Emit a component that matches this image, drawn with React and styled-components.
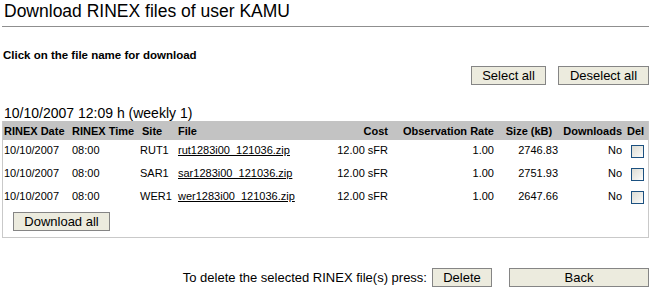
import React from "react";
import styled, { createGlobalStyle } from "styled-components";

const Global = createGlobalStyle`
  html, body { margin: 0; padding: 0; background: #fff; }
  body { font-family: "Liberation Sans", Arial, sans-serif; color: #000; }
`;

const Page = styled.div`
  width: 647px;
  margin-left: 2px;
  display: flex;
  flex-direction: column;
`;

const Title = styled.h1`
  margin: 0;
  padding: 1px 0 0 2px;
  font-size: 17.5px;
  line-height: 20px;
  font-weight: normal;
`;

const Rule = styled.div`
  margin-top: 5px;
  height: 1px;
  background: #8f8f8f;
`;

const Hint = styled.div`
  margin-top: 22px;
  padding-left: 1px;
  font-size: 11.5px;
  line-height: 13px;
  font-weight: bold;
`;

const Toolbar = styled.div`
  display: flex;
  justify-content: ${(p) => p.$justify || "flex-end"};
  align-items: center;
  gap: ${(p) => p.$gap || 12}px;
  margin-top: ${(p) => p.$top || 0}px;
`;

const Button = styled.button`
  box-sizing: border-box;
  width: ${(p) => p.$w}px;
  height: ${(p) => p.$h || 19}px;
  padding: 0;
  margin: 0;
  background: #ecebde;
  border: 1px solid #858585;
  border-radius: 0;
  font-family: "Liberation Sans", Arial, sans-serif;
  font-size: 13px;
  color: #000;
  line-height: 1;
  cursor: pointer;
`;

const Stamp = styled.div`
  margin-top: 20px;
  padding-left: 2px;
  font-size: 14px;
  line-height: 16px;
`;

const Box = styled.div`
  border: 1px solid #c9c9c9;
  border-top: none;
  padding-bottom: 6px;
`;

const Table = styled.table`
  width: 100%;
  table-layout: fixed;
  border-collapse: collapse;
  border-spacing: 0;
  font-size: 11px;
`;

const HeadRow = styled.tr`
  background: #c3c3c3;
  height: 19px;
`;

const Th = styled.th`
  font-weight: bold;
  vertical-align: top;
  padding: 4px ${(p) => p.$pr ?? 0}px 0 ${(p) => p.$pl ?? 0}px;
  text-align: ${(p) => p.$align || "left"};
  white-space: nowrap;
  overflow: visible;
`;

const Row = styled.tr`
  height: 23px;
`;

const Td = styled.td`
  vertical-align: top;
  padding: 4px ${(p) => p.$pr ?? 0}px 0 ${(p) => p.$pl ?? 0}px;
  text-align: ${(p) => p.$align || "left"};
  white-space: nowrap;
`;

const FileLink = styled.a`
  color: #000;
  text-decoration: underline;
`;

const Check = styled.input.attrs({ type: "checkbox" })`
  appearance: none;
  -webkit-appearance: none;
  box-sizing: border-box;
  display: block;
  width: 13px;
  height: 13px;
  margin: 1px 0 0 6px;
  border: 1px solid #1c5180;
  background: linear-gradient(135deg, #dcdcd4 0%, #f2f2ee 70%, #ffffff 100%);
  border-radius: 0;
`;

const DownloadAllWrap = styled.div`
  margin: 3px 0 0 10px;
`;

const Note = styled.span`
  font-size: 13px;
  margin-right: -12px;
`;

const files = [
  { site: "RUT1", file: "rut1283i00_121036.zip", size: "2746.83" },
  { site: "SAR1", file: "sar1283i00_121036.zip", size: "2751.93" },
  { site: "WER1", file: "wer1283i00_121036.zip", size: "2647.66" },
];

export default function App() {
  return (
    <>
      <Global />
      <Page>
        <Title>Download RINEX files of user KAMU</Title>
        <Rule />
        <Hint>Click on the file name for download</Hint>
        <Toolbar $top={4}>
          <Button $w={75}>Select all</Button>
          <Button $w={91}>Deselect all</Button>
        </Toolbar>
        <Stamp>10/10/2007 12:09 h (weekly 1)</Stamp>
        <Box>
          <Table>
            <colgroup>
              <col style={{ width: 67 }} />
              <col style={{ width: 70 }} />
              <col style={{ width: 36 }} />
              <col style={{ width: 154 }} />
              <col style={{ width: 61 }} />
              <col style={{ width: 106 }} />
              <col style={{ width: 64 }} />
              <col style={{ width: 64 }} />
              <col style={{ width: 23 }} />
            </colgroup>
            <thead>
              <HeadRow>
                <Th $pl={1}>RINEX Date</Th>
                <Th $pl={2}>RINEX Time</Th>
                <Th $pl={2}>Site</Th>
                <Th $pl={2}>File</Th>
                <Th $align="right" $pr={3}>Cost</Th>
                <Th $align="right" $pr={3}>Observation Rate</Th>
                <Th $align="center">Size (kB)</Th>
                <Th $align="right" $pr={3}>Downloads</Th>
                <Th $pl={2}>Del</Th>
              </HeadRow>
            </thead>
            <tbody>
              {files.map((f) => (
                <Row key={f.site}>
                  <Td $pl={1}>10/10/2007</Td>
                  <Td $pl={2}>08:00</Td>
                  <Td $align="right" $pr={9}>{f.site}</Td>
                  <Td $pl={2}>
                    <FileLink href="#">{f.file}</FileLink>
                  </Td>
                  <Td $align="right" $pr={3}>12.00 sFR</Td>
                  <Td $align="right" $pr={3}>1.00</Td>
                  <Td $align="right" $pr={3}>{f.size}</Td>
                  <Td $align="right" $pr={3}>No</Td>
                  <Td>
                    <Check />
                  </Td>
                </Row>
              ))}
            </tbody>
          </Table>
          <DownloadAllWrap>
            <Button $w={97}>Download all</Button>
          </DownloadAllWrap>
        </Box>
        <Toolbar $top={30} $gap={17}>
          <Note>To delete the selected RINEX file(s) press:</Note>
          <Button $w={60}>Delete</Button>
          <Button $w={140}>Back</Button>
        </Toolbar>
      </Page>
    </>
  );
}
